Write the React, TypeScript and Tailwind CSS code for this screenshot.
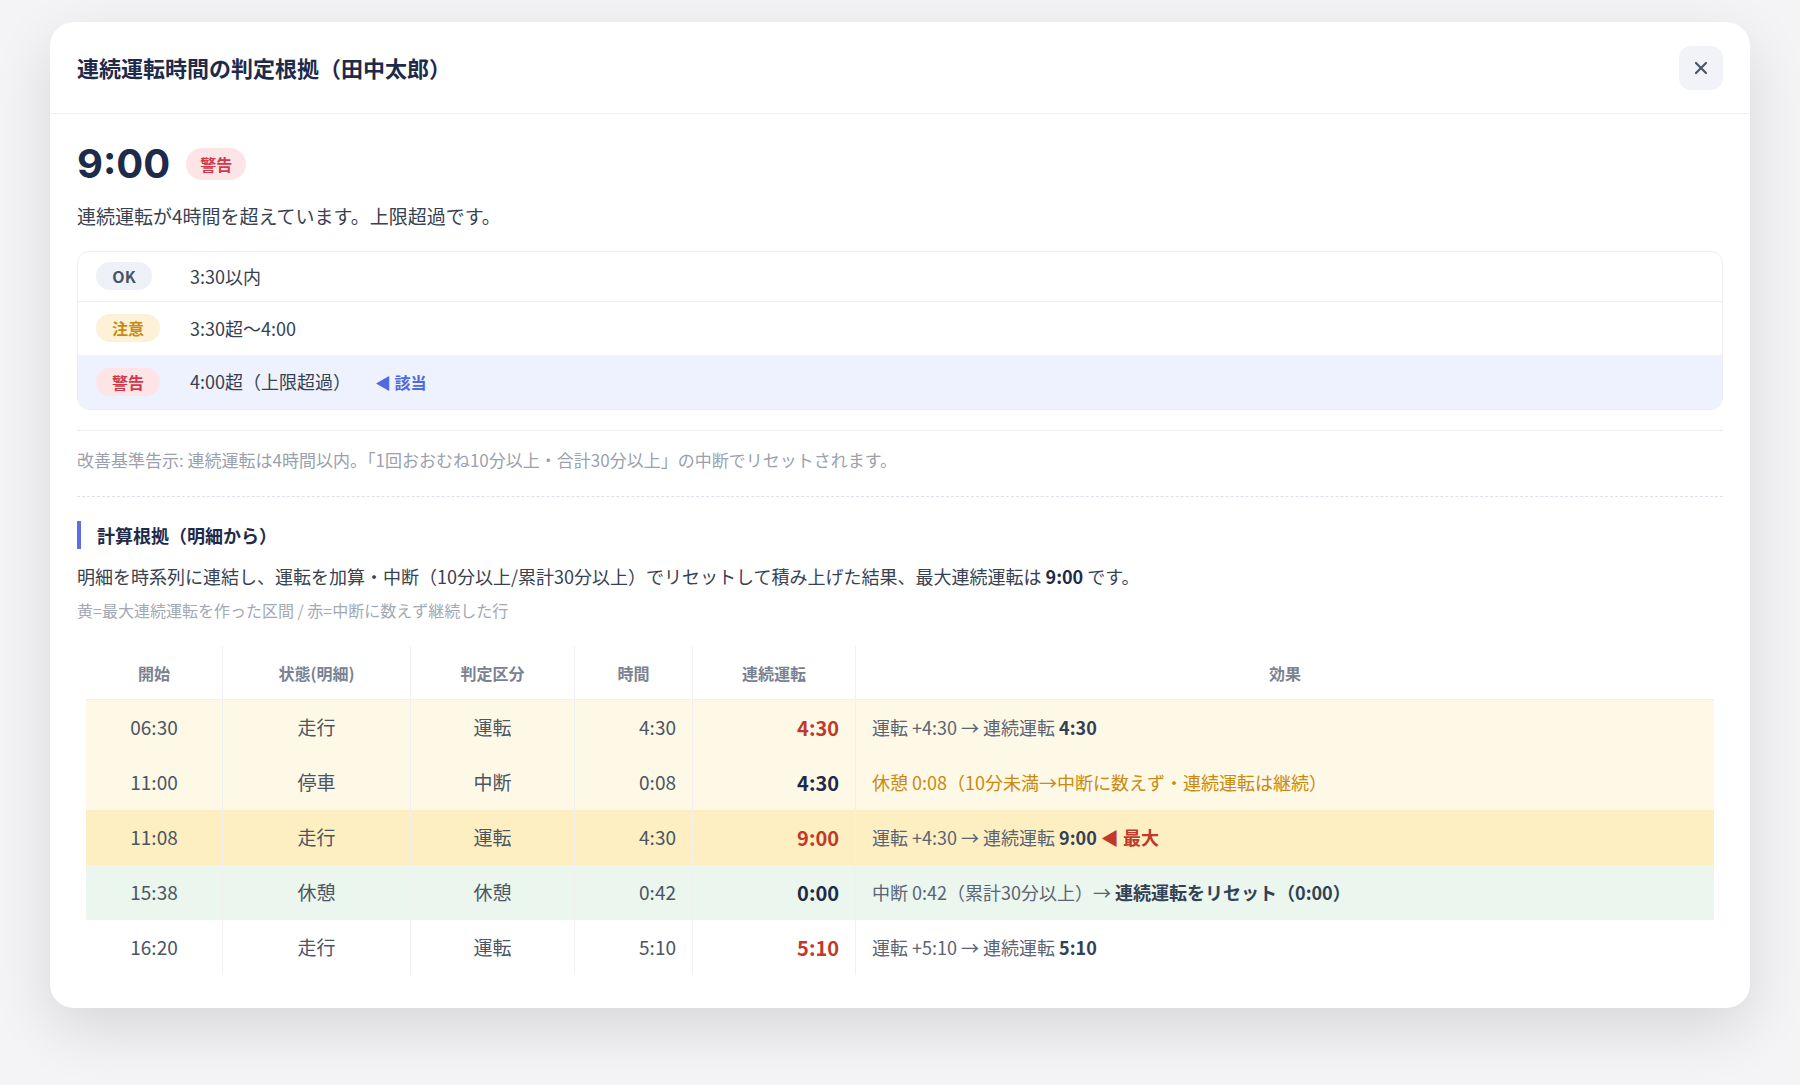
import React from "react";

const rows = [
  { s: "06:30", st: "走行", k: "運転", t: "4:30", c: "4:30", cc: "text-[#c0392b]", bg: "bg-[#fef8e6]", eff: <span>運転 +4:30 → 連続運転 <b className="text-[#334155]">4:30</b></span> },
  { s: "11:00", st: "停車", k: "中断", t: "0:08", c: "4:30", cc: "text-[#1e2a4a]", bg: "bg-[#fef8e6]", eff: <span className="text-[#c98a10]">休憩 0:08（10分未満→中断に数えず・連続運転は継続）</span> },
  { s: "11:08", st: "走行", k: "運転", t: "4:30", c: "9:00", cc: "text-[#c0392b]", bg: "bg-[#fdefc2]", eff: <span>運転 +4:30 → 連続運転 <b className="text-[#334155]">9:00</b> <b className="text-[#c0392b]">◀ 最大</b></span> },
  { s: "15:38", st: "休憩", k: "休憩", t: "0:42", c: "0:00", cc: "text-[#1e2a4a]", bg: "bg-[#eaf6ee]", eff: <span>中断 0:42（累計30分以上）→ <b className="text-[#334155]">連続運転をリセット（0:00）</b></span> },
  { s: "16:20", st: "走行", k: "運転", t: "5:10", c: "5:10", cc: "text-[#c0392b]", bg: "bg-white", eff: <span>運転 +5:10 → 連続運転 <b className="text-[#334155]">5:10</b></span> },
];

export default function App() {
  return (
    <div className="w-[1800px] h-[1085px] bg-[#f4f4f6] pt-[22px] pl-[50px]" style={{ fontFamily: '"Noto Sans CJK JP", Inter, sans-serif' }}>
      <div className="w-[1700px] h-[986px] bg-white rounded-[24px] shadow-[0_20px_60px_rgba(0,0,0,0.12)] overflow-hidden">
        <div className="h-[92px] flex items-center justify-between px-[27px] border-b border-[#eceef2]">
          <div className="text-[22px] font-bold text-[#1e2a4a]">連続運転時間の判定根拠（田中太郎）</div>
          <div className="w-[44px] h-[44px] rounded-[12px] bg-[#f1f3f9] flex items-center justify-center text-[#4b5567]">
            <svg width="14" height="14" viewBox="0 0 14 14"><path d="M2 2L12 12M12 2L2 12" stroke="currentColor" strokeWidth="2.2" strokeLinecap="round" /></svg>
          </div>
        </div>
        <div className="px-[27px]">
          <div className="flex items-center gap-[16px] mt-[24px] h-[52px]">
            <div className="text-[40px] font-bold text-[#1e2a4a] leading-none" style={{ fontFamily: "Inter, sans-serif" }}>9:00</div>
            <span className="px-[14px] py-[4px] rounded-full bg-[#fde4e6] text-[#d0394a] text-[16px] font-bold">警告</span>
          </div>
          <div className="mt-[12px] text-[19px] text-[#374151]">連続運転が4時間を超えています。上限超過です。</div>
          <div className="mt-[20px] border border-[#eceef2] rounded-[12px] overflow-hidden text-[18px] text-[#374151]">
            <div className="h-[50px] flex items-center px-[18px] border-b border-[#eceef2]">
              <span className="w-[56px] text-center py-[2px] rounded-full bg-[#eef1f7] text-[#475569] text-[16px] font-bold">OK</span>
              <span className="ml-[38px]">3:30以内</span>
            </div>
            <div className="h-[53px] flex items-center px-[18px]">
              <span className="w-[64px] text-center py-[2px] rounded-full bg-[#fdf1d8] text-[#c98a10] text-[16px] font-bold">注意</span>
              <span className="ml-[30px]">3:30超〜4:00</span>
            </div>
            <div className="h-[54px] flex items-center px-[18px] bg-[#eef2fe]">
              <span className="w-[64px] text-center py-[2px] rounded-full bg-[#fde4e6] text-[#d0394a] text-[16px] font-bold">警告</span>
              <span className="ml-[30px]">4:00超（上限超過）</span>
              <span className="ml-[24px] text-[#4f6ae0] font-bold text-[16px]">◀ 該当</span>
            </div>
          </div>
          <div className="mt-[20px] border-t border-[#eceef2]" />
          <div className="mt-[16px] text-[17px] text-[#9aa1ad]">改善基準告示: 連続運転は4時間以内。「1回おおむね10分以上・合計30分以上」の中断でリセットされます。</div>
          <div className="mt-[24px] border-t border-dashed border-[#dde0e6]" />
          <div className="mt-[24px] flex items-center border-l-[4px] border-[#5b6ee6] pl-[16px] h-[28px] text-[18px] font-bold text-[#1e2a4a]">計算根拠（明細から）</div>
          <div className="mt-[14px] text-[18px] text-[#374151]">明細を時系列に連結し、運転を加算・中断（10分以上/累計30分以上）でリセットして積み上げた結果、最大連続運転は <b className="text-[#1e2a4a]">9:00</b> です。</div>
          <div className="mt-[8px] text-[16px] text-[#a3a9b4]">黄=最大連続運転を作った区間 / 赤=中断に数えず継続した行</div>
          <div className="mt-[24px] mx-[9px]">
            <div className="grid grid-cols-[137px_188px_164px_118px_163px_1fr] h-[54px] text-[16px] font-bold text-[#7a8291] border-b border-[#eef0f3]">
              {["開始", "状態(明細)", "判定区分", "時間", "連続運転", "効果"].map((h, i) => (
                <div key={h} className={`flex items-center justify-center ${i < 5 ? "border-r border-[#eef0f3]" : ""}`}>{h}</div>
              ))}
            </div>
            {rows.map((r) => (
              <div key={r.s} className={`grid grid-cols-[137px_188px_164px_118px_163px_1fr] h-[55px] text-[19px] text-[#4b5563] ${r.bg}`}>
                <div className="flex items-center justify-center border-r border-[#f0f0f0]">{r.s}</div>
                <div className="flex items-center justify-center border-r border-[#f0f0f0]">{r.st}</div>
                <div className="flex items-center justify-center border-r border-[#f0f0f0]">{r.k}</div>
                <div className="flex items-center justify-end pr-[16px] border-r border-[#f0f0f0]">{r.t}</div>
                <div className={`flex items-center justify-end pr-[16px] border-r border-[#f0f0f0] font-bold text-[20px] ${r.cc}`}>{r.c}</div>
                <div className="flex items-center pl-[16px] text-[18px] text-[#5b6472]">{r.eff}</div>
              </div>
            ))}
          </div>
        </div>
      </div>
    </div>
  );
}
